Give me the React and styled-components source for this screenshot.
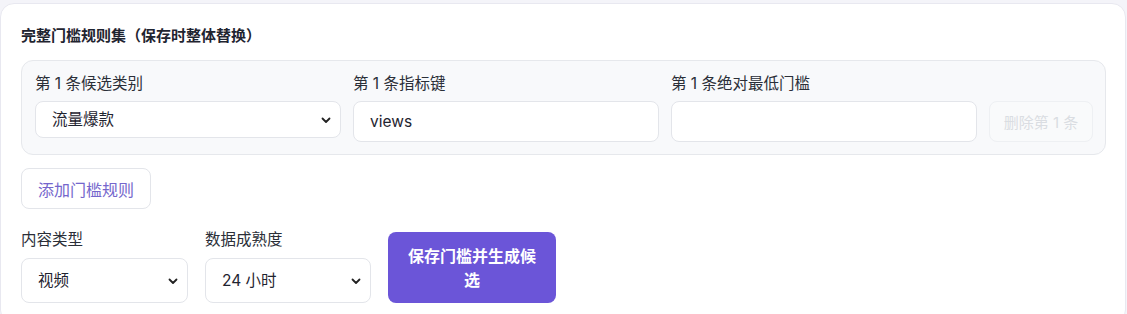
import React, { useState } from "react";
import styled, { createGlobalStyle } from "styled-components";

const GlobalStyle = createGlobalStyle`
  html, body {
    margin: 0;
    padding: 0;
    background: #f4f4f9;
    font-family: Inter, "Noto Sans CJK SC", "Noto Sans", sans-serif;
    color: #1f2430;
  }
  * { box-sizing: border-box; }
`;

const Card = styled.div`
  width: 1126px;
  margin-top: 3px;
  background: #fff;
  border: 1px solid #e8e8f0;
  border-radius: 14px;
  padding: 22px 19px 20px 20px;
`;

const Title = styled.div`
  font-size: 15px;
  line-height: 20px;
  font-weight: 700;
  color: #1f2430;
`;

const RulePanel = styled.div`
  margin-top: 14px;
  background: #f8f9fb;
  border: 1px solid #e6e8ec;
  border-radius: 12px;
  padding: 13px 12px 12px 13px;
  display: grid;
  grid-template-columns: 1fr 1fr 1fr 104px;
  column-gap: 12px;
  align-items: end;
`;

const Field = styled.div`
  display: flex;
  flex-direction: column;
  gap: ${(p) => (p.$gap ? p.$gap : 7)}px;
  width: ${(p) => (p.$width ? `${p.$width}px` : "auto")};
`;

const Label = styled.label`
  font-size: 15.5px;
  line-height: 20px;
  color: #2b2f38;
`;

const SelectWrap = styled.div`
  position: relative;
  margin-bottom: ${(p) => (p.$offset ? p.$offset : 0)}px;
`;

const Select = styled.select`
  appearance: none;
  width: 100%;
  height: ${(p) => p.$h}px;
  border: 1px solid #e3e5ea;
  border-radius: 8px;
  background: #fff;
  padding: 0 32px 0 16px;
  font: inherit;
  font-size: 15.5px;
  color: #1f2430;
  outline: none;
`;

const Chevron = styled.svg`
  position: absolute;
  right: 9px;
  top: 50%;
  transform: translateY(-50%);
  pointer-events: none;
`;

const Input = styled.input`
  width: 100%;
  height: 41px;
  border: 1px solid #e3e5ea;
  border-radius: 8px;
  background: #fff;
  padding: 0 16px;
  font: inherit;
  font-size: 15.5px;
  color: #1f2430;
  outline: none;
`;

const DeleteButton = styled.button`
  height: 41px;
  border: 1px solid #eef0f3;
  border-radius: 8px;
  background: #f9fafb;
  color: #dadde2;
  font: inherit;
  font-size: 15px;
  padding: 0;
  cursor: not-allowed;
`;

const GhostButton = styled.button`
  margin-top: 13px;
  height: 41px;
  padding: 0 16px;
  background: #fff;
  border: 1px solid #e3e5ea;
  border-radius: 8px;
  color: #7466cc;
  font: inherit;
  font-size: 16px;
`;

const BottomRow = styled.div`
  margin-top: 21px;
  display: flex;
  align-items: flex-end;
  gap: 17px;
`;

const PrimaryButton = styled.button`
  width: 168px;
  height: 71px;
  padding: 0 18px;
  background: #6b55d8;
  border: none;
  border-radius: 8px;
  color: #fff;
  font: inherit;
  font-size: 16px;
  line-height: 24px;
  font-weight: 600;
`;

const ChevronIcon = () => (
  <Chevron width="12" height="12" viewBox="0 0 12 12">
    <path d="M2.5 4.5 L6 8 L9.5 4.5" fill="none" stroke="#222" strokeWidth="1.8" strokeLinecap="round" strokeLinejoin="round" />
  </Chevron>
);

const App = () => {
  const [category, setCategory] = useState("流量爆款");
  const [metric, setMetric] = useState("views");
  const [minValue, setMinValue] = useState("");
  const [contentType, setContentType] = useState("视频");
  const [maturity, setMaturity] = useState("24 小时");

  return (
    <>
      <GlobalStyle />
      <Card>
        <Title>完整门槛规则集（保存时整体替换）</Title>
        <RulePanel>
          <Field>
            <Label>第 1 条候选类别</Label>
            <SelectWrap $offset={4}>
              <Select $h={37} value={category} onChange={(e) => setCategory(e.target.value)}>
                <option>流量爆款</option>
                <option>互动爆款</option>
              </Select>
              <ChevronIcon />
            </SelectWrap>
          </Field>
          <Field>
            <Label>第 1 条指标键</Label>
            <Input value={metric} onChange={(e) => setMetric(e.target.value)} />
          </Field>
          <Field>
            <Label>第 1 条绝对最低门槛</Label>
            <Input value={minValue} onChange={(e) => setMinValue(e.target.value)} />
          </Field>
          <DeleteButton disabled>删除第 1 条</DeleteButton>
        </RulePanel>

        <GhostButton>添加门槛规则</GhostButton>

        <BottomRow>
          <Field $width={167} $gap={8}>
            <Label>内容类型</Label>
            <SelectWrap>
              <Select $h={45} value={contentType} onChange={(e) => setContentType(e.target.value)}>
                <option>视频</option>
                <option>图文</option>
              </Select>
              <ChevronIcon />
            </SelectWrap>
          </Field>
          <Field $width={166} $gap={8}>
            <Label>数据成熟度</Label>
            <SelectWrap>
              <Select $h={45} value={maturity} onChange={(e) => setMaturity(e.target.value)}>
                <option>24 小时</option>
                <option>72 小时</option>
              </Select>
              <ChevronIcon />
            </SelectWrap>
          </Field>
          <PrimaryButton>保存门槛并生成候选</PrimaryButton>
        </BottomRow>
      </Card>
    </>
  );
};

export default App;
